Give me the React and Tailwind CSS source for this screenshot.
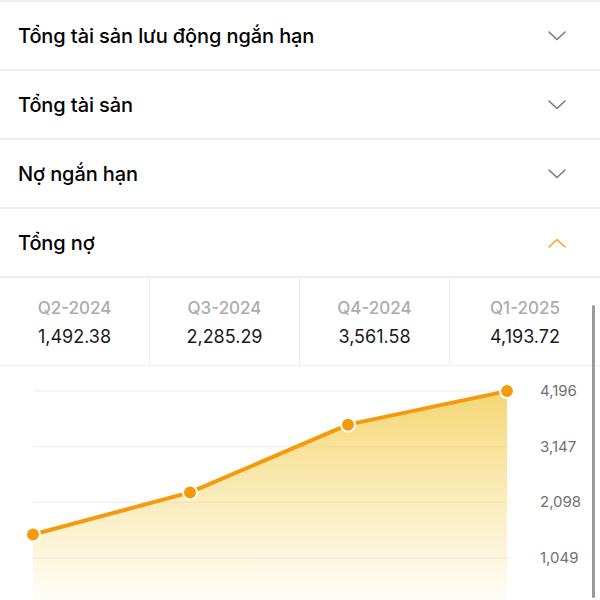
const rows = [
  { title: "Tổng tài sản lưu động ngắn hạn", open: false },
  { title: "Tổng tài sản", open: false },
  { title: "Nợ ngắn hạn", open: false },
  { title: "Tổng nợ", open: true },
];

const quarters = [
  { q: "Q2-2024", v: 1492.38 },
  { q: "Q3-2024", v: 2285.29 },
  { q: "Q4-2024", v: 3561.58 },
  { q: "Q1-2025", v: 4193.72 },
];

const ticks = [4196, 3147, 2098, 1049];

function fmt(n, d) {
  return n.toLocaleString("en-US", { minimumFractionDigits: d, maximumFractionDigits: d });
}

function Chevron({ up }) {
  return (
    <svg width="18" height="10" viewBox="0 0 18 10" fill="none">
      <path
        d={up ? "M1 9 L9 1.5 L17 9" : "M1 1 L9 8.5 L17 1"}
        stroke={up ? "#f5a623" : "#7a7a7a"}
        strokeWidth="1.6"
        strokeLinecap="round"
        strokeLinejoin="round"
      />
    </svg>
  );
}

function Chart() {
  // y positions relative to the svg top (page y = 366)
  const yOf = (v) => 25 + ((4196 - v) / 3147) * 167;
  const xs = [33, 190, 348, 507];
  const pts = quarters.map((q, i) => [xs[i], yOf(q.v)]);
  const line = pts.map((p) => p.join(",")).join(" ");
  const area = `${xs[0]},234 ${line} ${xs[3]},234`;

  return (
    <svg width="600" height="234" className="block">
      <defs>
        <linearGradient id="fill" x1="0" y1="0" x2="0" y2="1">
          <stop offset="0%" stopColor="#f3cf5c" stopOpacity="0.85" />
          <stop offset="100%" stopColor="#f6d76a" stopOpacity="0.05" />
        </linearGradient>
      </defs>
      {ticks.map((t) => (
        <g key={t}>
          <line x1="33" x2="510" y1={yOf(t)} y2={yOf(t)} stroke="#ececec" strokeWidth="1" />
          <text x="540" y={yOf(t) + 5} fontSize="15" fill="#707070" fontFamily="Inter, sans-serif">
            {fmt(t, 0)}
          </text>
        </g>
      ))}
      <polygon points={area} fill="url(#fill)" />
      <polyline points={line} fill="none" stroke="#f59a0c" strokeWidth="4" strokeLinejoin="round" />
      {pts.map(([x, y], i) => (
        <circle key={i} cx={x} cy={y} r="7" fill="#f59a0c" stroke="#fff" strokeWidth="2" />
      ))}
    </svg>
  );
}

export default function App() {
  return (
    <div
      className="relative w-[600px] h-[600px] overflow-hidden bg-white text-black"
      style={{ fontFamily: "Inter, 'Noto Sans', sans-serif" }}
    >
      <div className="border-t-2 border-[#efefef]">
        {rows.map((r) => (
          <div
            key={r.title}
            className="flex items-center justify-between h-[69px] pl-[18px] pr-[34px] border-b-2 border-[#efefef]"
          >
            <span className="text-[20px] font-medium tracking-[-0.1px]">{r.title}</span>
            <Chevron up={r.open} />
          </div>
        ))}
      </div>

      <div className="grid grid-cols-4 h-[88px] border-b border-[#efefef]">
        {quarters.map((q, i) => (
          <div
            key={q.q}
            className={`flex flex-col items-center justify-center gap-[6px] pt-[2px] ${i < 3 ? "border-r border-[#ececec]" : ""}`}
          >
            <span className="text-[17px] leading-[22px] font-medium text-[#acacac]">{q.q}</span>
            <span className="text-[18px] leading-[24px] text-[#1a1a1a]">{fmt(q.v, 2)}</span>
          </div>
        ))}
      </div>

      <Chart />

      <div className="absolute right-[5px] top-[305px] w-[3px] h-[293px] rounded-full bg-[#9a9a9a]" />
    </div>
  );
}
